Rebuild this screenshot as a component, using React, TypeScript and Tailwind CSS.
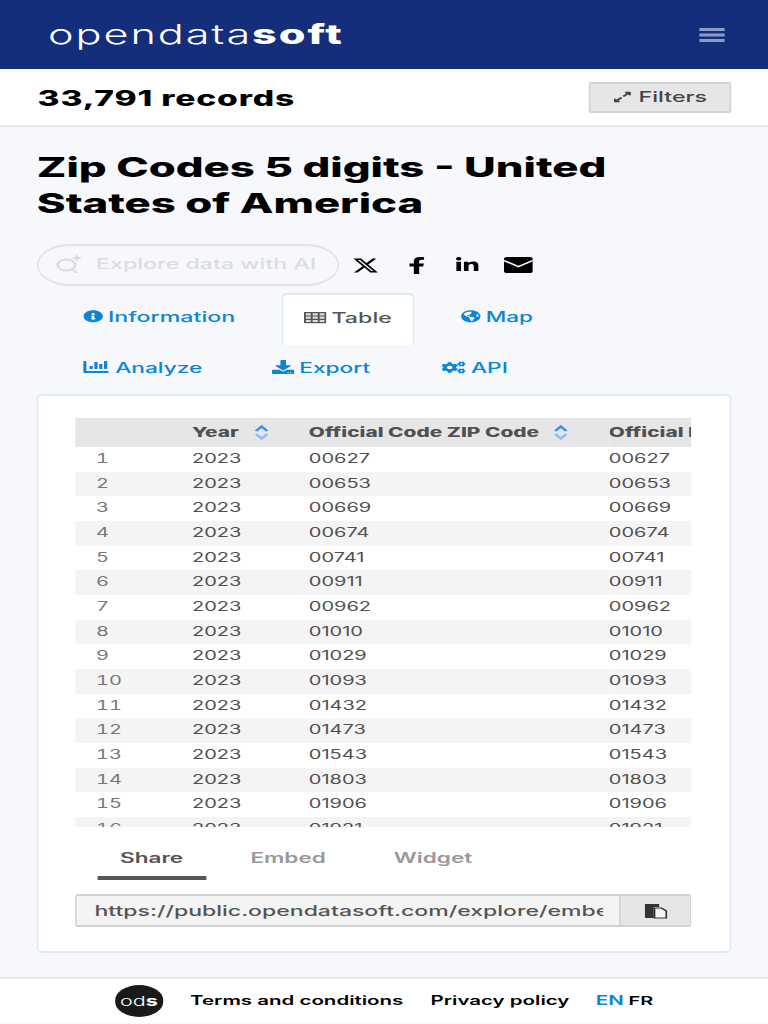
import { Fragment } from "react";
import {
  FaChartBar,
  FaCogs,
  FaDownload,
  FaExpandAlt,
  FaFacebookF,
  FaGlobeAmericas,
  FaInfoCircle,
  FaLinkedinIn,
} from "react-icons/fa";
import { FaXTwitter } from "react-icons/fa6";

const rows = [
  "00627", "00653", "00669", "00674", "00741", "00911", "00962", "01010",
  "01029", "01093", "01432", "01473", "01543", "01803", "01906", "01921",
];

function Sort() {
  return (
    <svg width="9" height="15" viewBox="0 0 9 15" fill="none" strokeWidth="2" aria-hidden="true">
      <path d="M1 6l3.500-4.500L8 6" stroke="#3b8df0" />
      <path d="M1 9l3.500 4.500L8 9" stroke="#8dbcf5" />
    </svg>
  );
}

export default function App() {
  return (
    // the page is a 480px layout shown stretched to the 768px window
    <div className="flex min-h-[1024px] w-[480px] origin-top-left scale-x-[1.6] flex-col bg-[#f6f8fc] font-['Inter',sans-serif] text-black">
      <header className="flex h-[69px] items-center justify-between bg-[#142e7b] pl-[30px] pr-[27px]">
        <div className="text-[27px] leading-none tracking-[1.200px] text-white">
          <span className="font-light">opendata</span>
          <span className="font-extrabold">soft</span>
        </div>
        <svg width="16" height="14" viewBox="0 0 16 14" fill="#8e9bc6" aria-hidden="true">
          <rect width="16" height="3" />
          <rect y="5.500" width="16" height="3" />
          <rect y="11" width="16" height="3" />
        </svg>
      </header>

      <div className="flex h-[58px] items-center justify-between border-b-2 border-[#e2e7ef] bg-white pl-[23.500px] pr-[23px]">
        <div className="pt-[3px] text-[21px] font-extrabold tracking-[0.500px]">33,791 records</div>
        <button className="flex h-[31px] w-[89px] items-center justify-center gap-[4px] rounded-[2px] border-x border-y-2 border-[#d2d2d2] bg-[#e6e6e6] text-[14.500px] font-medium text-[#444]">
          <FaExpandAlt size={12} />
          Filters
        </button>
      </div>

      <main className="flex flex-1 flex-col px-[23px] pt-[23px]">
        <h1 className="text-[27.300px] font-extrabold leading-[36px]">
          Zip Codes 5 digits - United
          <br />
          States of America
        </h1>

        <div className="mt-[22px] flex items-center">
          <div className="flex h-[42px] w-[189px] items-center gap-[8px] rounded-full border-x border-y-2 border-[#e2e2e4] pb-[2px] pl-[11px] text-[14.500px] font-medium text-[#dcdcdf]">
            <svg width="17" height="22" viewBox="0 0 17 22" fill="none" stroke="#dcdcdf" strokeWidth="1.800" aria-hidden="true">
              <circle cx="6.500" cy="12" r="5.500" />
              <path d="M10.500 16.500l2.500 3.500" />
              <path d="M13 1l1 3 3 1-3 1-1 3-1-3-3-1 3-1z" fill="#dcdcdf" stroke="none" />
            </svg>
            Explore data with AI
          </div>
          <div className="ml-px flex items-center text-black [&>*]:flex [&>*]:w-[31.600px] [&>*]:justify-center">
            <span>
              <FaXTwitter size={17} />
            </span>
            <span>
              <FaFacebookF size={17} />
            </span>
            <span>
              <FaLinkedinIn size={16} />
            </span>
            <span>
              <svg width="18" height="16" viewBox="0 0 18 16" aria-hidden="true">
                <rect width="18" height="16" rx="2" fill="#000" />
                <path d="M0 3.500l9 6 9-6" fill="none" stroke="#f6f8fc" strokeWidth="1.500" />
              </svg>
            </span>
          </div>
        </div>

        <nav className="mt-[7px] flex h-[52px] text-[14.500px] font-medium text-[#0a86d8]">
          <a className="ml-[29px] flex items-center gap-[3px] pb-[5px]">
            <FaInfoCircle size={12.500} />
            Information
          </a>
          <a className="ml-[29px] flex w-[83px] items-center justify-center gap-[3px] rounded-t-[4px] border-x border-t-2 border-[#dfe7f3] bg-white pb-[5px] text-[#555]">
            <svg width="14" height="13" viewBox="0 0 14 13" fill="none" stroke="#555" strokeWidth="1.200" aria-hidden="true">
              <rect x=".6" y="1.600" width="12.800" height="10" fill="#ddd" />
              <path d="M.6 5h12.800M.6 8.300h12.800M4.800 1.600v10M9.200 1.600v10" />
            </svg>
            Table
          </a>
          <a className="ml-[29px] flex items-center gap-[3px] pb-[5px] text-[14.100px]">
            <FaGlobeAmericas size={12.500} />
            Map
          </a>
        </nav>

        <nav className="flex h-[49px] items-center pb-[4px] pl-[29px] text-[14.200px] font-medium text-[#0a86d8]">
          <a className="flex items-center gap-[4px]">
            <FaChartBar size={16} />
            Analyze
          </a>
          <a className="ml-[43px] flex items-center gap-[3.500px]">
            <FaDownload size={14} />
            Export
          </a>
          <a className="ml-[45px] flex items-center gap-[3px]">
            <FaCogs size={15} />
            API
          </a>
        </nav>

        <section className="rounded-[4px] border-x border-y-2 border-[#e2e8f2] bg-white pb-[24px] pl-[23px] pr-[24px] pt-[22px]">
          <div className="h-[409px] overflow-hidden text-[12.500px] text-[#505050]">
            <div className="grid grid-cols-[73px_73px_187.500px_51.500px]">
              <div className="h-[29px] bg-[#e6e6e6]" />
              <div className="flex h-[29px] items-center gap-[9.500px] bg-[#e6e6e6] text-[13px] font-extrabold">
                Year <Sort />
              </div>
              <div className="flex h-[29px] items-center gap-[9.500px] whitespace-nowrap bg-[#e6e6e6] text-[13px] font-extrabold">
                Official Code ZIP Code <Sort />
              </div>
              <div className="h-[29px] overflow-hidden whitespace-nowrap bg-[#e6e6e6] text-[13px] font-extrabold leading-[29px]">
                Official Name
              </div>
              {rows.map((zip, i) => (
                <Fragment key={zip}>
                  <div className={`h-[24.670px] pl-[13px] leading-[24.670px] tabular-nums text-[#777] ${i % 2 ? "bg-[#f4f4f4]" : ""}`}>{i + 1}</div>
                  <div className={`h-[24.670px] leading-[24.670px] ${i % 2 ? "bg-[#f4f4f4]" : ""}`}>2023</div>
                  <div className={`h-[24.670px] leading-[24.670px] ${i % 2 ? "bg-[#f4f4f4]" : ""}`}>{zip}</div>
                  <div className={`h-[24.670px] leading-[24.670px] ${i % 2 ? "bg-[#f4f4f4]" : ""}`}>{zip}</div>
                </Fragment>
              ))}
            </div>
          </div>

          <div className="mt-[14px] flex pl-[14px] text-[14.100px] font-semibold text-[#999]">
            <div className="h-[39px] w-[67.500px] border-b-[4px] border-[#555] pt-[6px] text-center text-[#555]">Share</div>
            <div className="ml-[28px] pt-[6px]">Embed</div>
            <div className="ml-[42.500px] pt-[6px]">Widget</div>
          </div>

          <div className="mt-[14px] flex h-[33px] overflow-hidden rounded-[2px] border-x border-y-2 border-[#d2d2d2]">
            <div className="min-w-0 flex-1 bg-[#f4f4f4] pl-[11px] pr-[10px] pt-px text-[14.400px] font-medium leading-[27px] text-[#555]">
              <div className="overflow-hidden whitespace-nowrap">https://public.opendatasoft.com/explore/embed/dataset/</div>
            </div>
            <div className="flex w-[44px] items-center justify-center border-l border-[#d2d2d2] bg-[#e6e6e6]">
              <svg width="14" height="16" viewBox="0 0 14 16" aria-hidden="true">
                <path d="M0 1h9v3H5.500v11H0z" fill="#333" />
                <path d="M6 5h4.500l3 3v7H6z" fill="#f4f4f4" stroke="#333" strokeWidth="1.200" />
              </svg>
            </div>
          </div>
        </section>

        <div className="h-[24px]" />
      </main>

      <footer className="mb-[2px] flex h-[46px] items-center justify-center border-t-2 border-[#e2e7ef] bg-white text-[12.800px] font-semibold">
        <div className="flex h-[32px] w-[30px] items-center justify-center rounded-full bg-[#1a1a1a] text-[13.500px] text-white">
          <span className="font-light">od</span>
          <span className="font-bold">s</span>
        </div>
        <span className="ml-[17px]">Terms and conditions</span>
        <span className="ml-[17px]">Privacy policy</span>
        <span className="ml-[16.500px] text-[#0a86d8]">EN</span>
        <span className="ml-[3px] text-[12.400px]">FR</span>
      </footer>
    </div>
  );
}
